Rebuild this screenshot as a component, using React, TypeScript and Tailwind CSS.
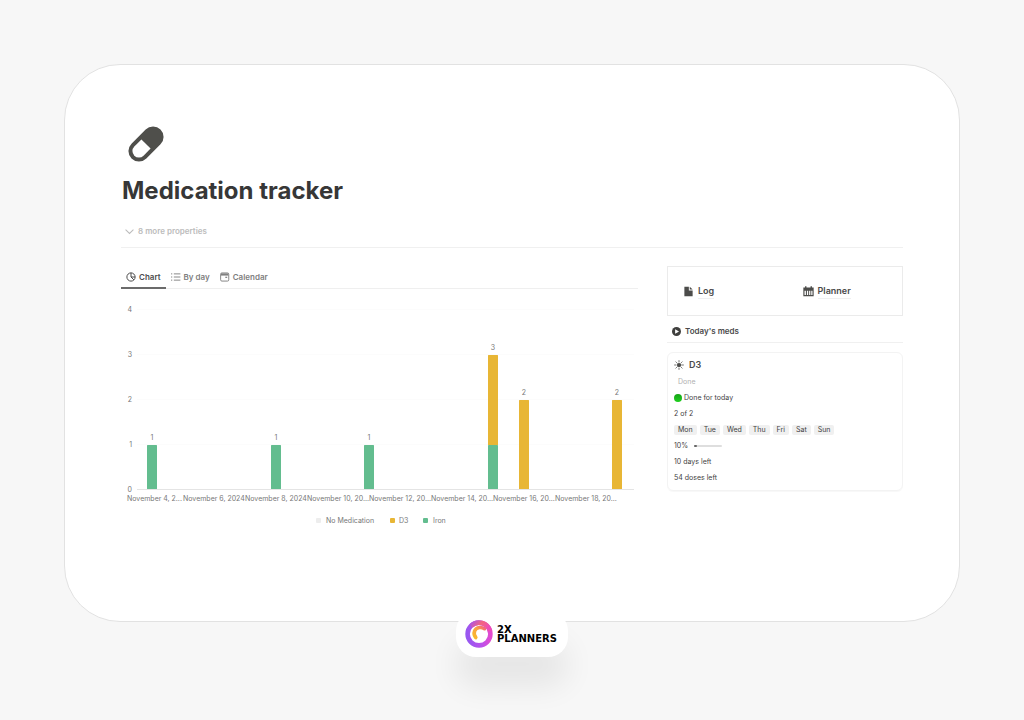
import { FC, ReactNode, useState } from "react";

type Series = "D3" | "Iron";

interface DayEntry {
  slot: number;
  values: { series: Series; count: number }[];
}

const seriesColor: Record<Series, string> = {
  D3: "#e8b635",
  Iron: "#63bd8f",
};

// slot 0 is November 4, 2024
const entries: DayEntry[] = [
  { slot: 0, values: [{ series: "Iron", count: 1 }] },
  { slot: 4, values: [{ series: "Iron", count: 1 }] },
  { slot: 7, values: [{ series: "Iron", count: 1 }] },
  {
    slot: 11,
    values: [
      { series: "Iron", count: 1 },
      { series: "D3", count: 2 },
    ],
  },
  { slot: 12, values: [{ series: "D3", count: 2 }] },
  { slot: 15, values: [{ series: "D3", count: 2 }] },
];

const dateLabels = [
  "November 4, 2...",
  "November 6, 2024",
  "November 8, 2024",
  "November 10, 20...",
  "November 12, 20...",
  "November 14, 20...",
  "November 16, 20...",
  "November 18, 20...",
];

const weekDays = ["Mon", "Tue", "Wed", "Thu", "Fri", "Sat", "Sun"];

const BASE = 201;
const UNIT = 45;
const SLOT = 31;

const MedicationChart: FC = () => (
  <svg
    viewBox="0 0 517 240"
    className="block w-full"
    role="img"
    aria-label="Medication doses by day"
    fontFamily="Inter, sans-serif"
    fontSize="7"
    fill="#777777"
  >
    {[0, 1, 2, 3, 4].map((n) => (
      <g key={n}>
        <line
          x1="16"
          x2="513"
          y1={BASE - n * UNIT - 0.5}
          y2={BASE - n * UNIT - 0.5}
          stroke={n === 0 ? "#e4e4e4" : "#fcfcfc"}
        />
        <text x="11" y={BASE - n * UNIT + 2} textAnchor="end">
          {n}
        </text>
      </g>
    ))}

    {entries.map(({ slot, values }) => {
      const center = 31 + slot * SLOT;
      let total = 0;
      return (
        <g key={slot}>
          {values.map(({ series, count }) => {
            const bottom = total === 0 ? 1 : 0;
            total += count;
            return (
              <rect
                key={series}
                x={center - 5}
                y={BASE - total * UNIT}
                width="10"
                height={count * UNIT - bottom}
                rx="0.5"
                fill={seriesColor[series]}
              />
            );
          })}
          <text x={center} y={BASE - total * UNIT - 5} textAnchor="middle">
            {total}
          </text>
        </g>
      );
    })}

    {dateLabels.map((label, i) => (
      <text key={label} x={i === 0 ? 6 : i * 62} y="212">
        {label}
      </text>
    ))}

    <rect x="195" y="229" width="5" height="5" rx="1" fill="#ededed" />
    <text x="205" y="234">
      No Medication
    </text>
    <rect x="269" y="229" width="5" height="5" rx="1" fill={seriesColor.D3} />
    <text x="278" y="234">
      D3
    </text>
    <rect x="302" y="229" width="5" height="5" rx="1" fill={seriesColor.Iron} />
    <text x="312" y="234">
      Iron
    </text>
  </svg>
);

const ChartIcon = () => (
  <svg viewBox="0 0 16 16" className="size-[10px]" fill="none" stroke="currentColor" strokeWidth="1.6">
    <circle cx="8" cy="8" r="6.6" />
    <path d="M8 1.4V8l4.7 4.7M8 8h6.6" />
  </svg>
);

const ListIcon = () => (
  <svg viewBox="0 0 16 16" className="size-[10px]" fill="none" stroke="currentColor" strokeWidth="1.5">
    <path d="M4.500 3h10.500M4.500 8h10.500M4.500 13h10.500M0 3h2M0 8h2M0 13h2" />
  </svg>
);

const CalendarIcon = () => (
  <svg viewBox="0 0 16 16" className="size-[10px]" fill="none" stroke="currentColor" strokeWidth="1.5">
    <rect x="1" y="1.5" width="13" height="13" rx="2" />
    <path d="M1.5 4h12" strokeWidth="3.5" />
    <path d="M8.5 8.5h3" strokeWidth="2" />
  </svg>
);

const tabs: { name: string; icon: ReactNode }[] = [
  { name: "Chart", icon: <ChartIcon /> },
  { name: "By day", icon: <ListIcon /> },
  { name: "Calendar", icon: <CalendarIcon /> },
];

const Tabs: FC = () => {
  const [active, setActive] = useState("Chart");

  return (
    <div role="tablist" className="flex border-b border-[#efefef]">
      {tabs.map(({ name, icon }) => (
        <button
          key={name}
          role="tab"
          aria-selected={active === name}
          onClick={() => setActive(name)}
          className={`-mb-px flex h-[23px] items-center gap-[3px] border-b-2 px-[5px] text-[8px] font-semibold ${
            active === name
              ? "border-[#6b6b6b] text-[#4d4d4d]"
              : "border-transparent text-[#808080]"
          }`}
        >
          {icon}
          {name}
        </button>
      ))}
    </div>
  );
};

const QuickLinks: FC = () => (
  <nav className="grid h-[50px] grid-cols-2 items-center border border-[#ebebeb] pt-px pl-[15px] text-[9px] font-semibold text-[#4a4a4a]">
    <a href="#log" className="flex items-center gap-1">
      <svg viewBox="0 0 16 16" className="size-[11px]" fill="#4c4c4a">
        <path d="M2 1h6.5v5.5H14V15H2z" />
        <path d="M9.8 1L14 5.2H9.8z" />
      </svg>
      <span className="border-b border-[#f0f0f0]">Log</span>
    </a>
    <a href="#planner" className="flex items-center gap-1 pl-[10px]">
      <svg viewBox="0 0 16 16" className="size-[11px]" fill="#4c4c4a">
        <path
          fillRule="evenodd"
          d="M3 .5h2V2h6V.5h2V2h2.5v13H.5V2H3zM2.2 7v6h2V7zm3.5 0v6h1.8V7zm3.2 0v6h1.8V7zm3.1 0v6h1.8V7z"
        />
      </svg>
      <span className="border-b border-[#f0f0f0]">Planner</span>
    </a>
  </nav>
);

const MedCard: FC = () => (
  <article className="mt-[9px] flex flex-col items-start rounded-md border border-[#f3f3f3] px-[6px] pt-[3px] pb-1 text-[7px] leading-4 text-[#3f3f3f] shadow-[0_1px_1px_rgba(0,0,0,0.03)]">
    <h3 className="flex items-center gap-[5px] text-[9px] leading-[18px] font-semibold text-[#4a4a4a]">
      <svg viewBox="0 0 16 16" className="size-[10px]" fill="none" stroke="#4c4c4a" strokeWidth="1.3" strokeLinecap="round">
        <circle cx="8" cy="8" r="3" fill="#4c4c4a" />
        <path d="M8 1v1.5M8 13.5V15M1 8h1.5M13.5 8H15M3 3l1.1 1.1M11.9 11.9L13 13M3 13l1.1-1.1M11.9 4.1L13 3" />
      </svg>
      D3
    </h3>
    <button className="ml-1 h-4 text-[#b0b0b0]">Done</button>
    <p className="flex items-center gap-[2px]">
      <span className="size-[8px] rounded-full bg-linear-to-b from-[#17a317] to-[#20d020]" />
      Done for today
    </p>
    <p>2 of 2</p>
    <ul className="flex gap-[3px]">
      {weekDays.map((day) => (
        <li key={day} className="my-[3px] rounded-xs bg-[#f0f0f0] px-1 leading-[10px]">
          {day}
        </li>
      ))}
    </ul>
    <p className="flex items-center gap-[6px]">
      10%
      <span className="flex h-[2px] w-[28px] rounded-full bg-[#dedede]">
        <span className="h-full w-[10%] rounded-full bg-[#666666]" />
      </span>
    </p>
    <p>10 days left</p>
    <p>54 doses left</p>
  </article>
);

const Brand: FC = () => (
  <div className="absolute top-full left-1/2 -mt-[10px] flex h-[46px] w-[112px] -translate-x-1/2 items-center gap-1 rounded-[20px] bg-white pl-[9px] shadow-[0_30px_30px_rgba(0,0,0,0.07)]">
    <svg viewBox="0 0 28 28" className="size-[28px] shrink-0" fill="none">
      <defs>
        <linearGradient id="ring" x1="0" y1="0.6" x2="1" y2="0.4">
          <stop offset="0" stopColor="#9858f0" />
          <stop offset="0.55" stopColor="#bd50ea" />
          <stop offset="1" stopColor="#e649cc" />
        </linearGradient>
        <linearGradient id="crest" x1="0" y1="0" x2="1" y2="0.4">
          <stop offset="0" stopColor="#b055e0" />
          <stop offset="0.5" stopColor="#f4657e" />
          <stop offset="1" stopColor="#ec4cb8" />
        </linearGradient>
        <linearGradient id="swirl" x1="0" y1="1" x2="1" y2="0">
          <stop offset="0" stopColor="#f9b92c" />
          <stop offset="0.6" stopColor="#f9a045" />
          <stop offset="1" stopColor="#f4657e" />
        </linearGradient>
      </defs>
      <circle cx="14" cy="14" r="11.4" stroke="url(#ring)" strokeWidth="4.6" />
      <path d="M6 6A11.4 11.4 0 0 1 25 11" stroke="url(#crest)" strokeWidth="4.6" />
      <path
        d="M10.8 17.5C7.5 13.500 9.500 8 14.500 7.500c2-.2 3.500.2 5 1.200"
        stroke="url(#swirl)"
        strokeWidth="3.6"
        strokeLinecap="round"
      />
    </svg>
    <div className="font-['DejaVu_Sans',sans-serif] text-[10px] leading-[9px] font-bold text-black">
      2X
      <br />
      PLANNERS
    </div>
  </div>
);

export default function App() {
  return (
    <div className="min-h-screen overflow-hidden bg-[#f7f7f7] p-16 pb-[98px] font-[Inter,sans-serif]">
      <main className="relative rounded-[56px] border border-[#e2e2e2] bg-white px-14 pt-[61px] pb-[92px]">
        <svg viewBox="0 0 36 36" className="ml-[7px] size-[36px]">
          <g transform="rotate(45 18 18)">
            <rect x="7.5" y="-2.5" width="21" height="41" rx="10.5" fill="#4f4f4b" />
            <path d="M11.5 18h13v10a6.5 6.5 0 0 1-13 0z" fill="#ffffff" />
          </g>
        </svg>
        <h1 className="mt-3 ml-px text-[24px] leading-[34px] font-bold text-[#373737]">
          Medication tracker
        </h1>
        <div className="mt-[15px] border-b border-[#f0f0f0] pb-2">
          <button className="flex h-[16px] items-center gap-1 pl-1 text-[8px] font-semibold text-[#bcbcbc]">
            <svg viewBox="0 0 16 16" className="size-[9px]" fill="none" stroke="currentColor" strokeWidth="1.8">
              <path d="M1 4.5l7 7 7-7" />
            </svg>
            8 more properties
          </button>
        </div>

        <div className="mt-[18px] grid grid-cols-[517fr_236fr] items-start gap-[29px]">
          <section>
            <Tabs />
            <MedicationChart />
          </section>
          <aside>
            <QuickLinks />
            <h2 className="mt-1 flex h-[23px] items-center gap-1 border-b border-[#f0f0f0] pl-[5px] text-[8px] font-semibold text-[#4a4a4a]">
              <svg viewBox="0 0 16 16" className="size-[9px]">
                <circle cx="8" cy="8" r="8" fill="#3f3f3d" />
                <path d="M5.5 4l7 4-7 4z" fill="#ffffff" />
              </svg>
              Today's meds
            </h2>
            <MedCard />
          </aside>
        </div>
        <Brand />
      </main>
    </div>
  );
}
